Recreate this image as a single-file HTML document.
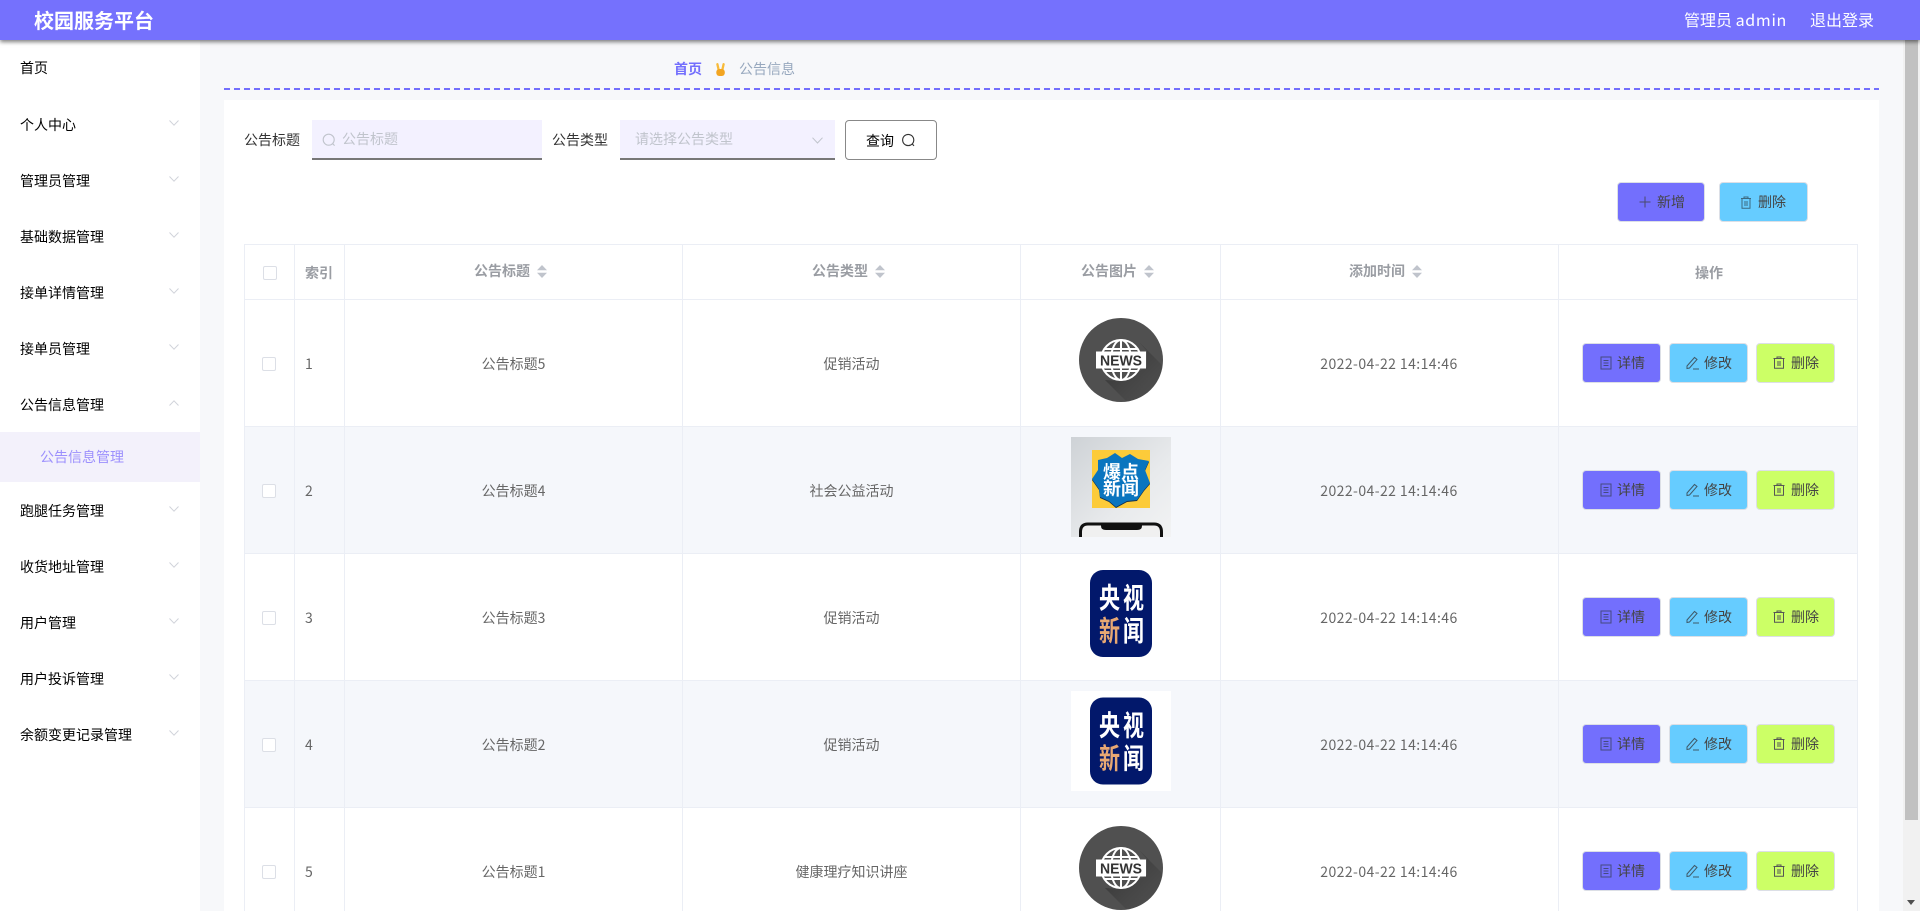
<!DOCTYPE html>
<html lang="zh"><head><meta charset="utf-8"><title>校园服务平台</title>
<style>
*{box-sizing:border-box}
html,body{margin:0;padding:0;width:1920px;height:911px;overflow:hidden;background:#f7f8fa;font-family:"Noto Sans CJK SC","Liberation Sans",sans-serif;font-size:14px;color:#333}
#root{position:relative;width:1920px;height:911px;overflow:hidden;background:#f7f8fa}
.a{position:absolute;white-space:nowrap;line-height:20px}
.hdr{position:absolute;left:0;top:0;width:1920px;height:40px;background:#7571fd;box-shadow:0 2px 4px rgba(0,0,0,.5);z-index:5;color:#fff}
.side{position:absolute;left:0;top:40px;width:200px;height:871px;background:#fff}
.m{position:absolute;left:20px;color:#000;line-height:20px;white-space:nowrap}
.chev{position:absolute;left:169px}
.card{position:absolute;left:224px;top:100px;width:1655px;height:811px;background:#fff}
.row{position:absolute;left:244px;width:1614px;height:127px;border-bottom:1px solid #ebeef5}
.row.alt{background:#f5f7fb}
.row .t{position:absolute;top:calc(53px + var(--d));line-height:20px;text-align:center;color:#666;white-space:nowrap}
.vl{position:absolute;top:244px;width:1px;height:667px;background:#ebeef5}
.cb{position:absolute;left:18px;top:calc(56px + var(--d));width:14px;height:14px;border:1px solid #dcdfe6;background:#fff;border-radius:2px}
.btn{position:absolute;height:40px;top:43px;border:1px solid #dcdfe6;border-radius:4px;line-height:38px;color:#444;font-size:14px;white-space:nowrap}
.btn svg{position:absolute;top:12px}
.btn span{position:absolute;top:0}
.b1{left:1338px;width:79px;background:#736ffd}
.b2{left:1425px;width:79px;background:#66ccff}
.b3{left:1512px;width:79px;background:#ccff66}
.th{position:absolute;line-height:20px;color:#9a9da3;font-weight:700;white-space:nowrap}
.img{position:absolute;display:block}
</style></head><body>
<div id="root">

<div class="hdr">
  <div class="a" style="left:34px;top:10px;font-size:20px;font-weight:700">校园服务平台</div>
  <div class="a" style="left:1684px;top:9px;font-size:16px">管理员 <span style="letter-spacing:.7px">admin</span></div>
  <div class="a" style="left:1810px;top:9px;font-size:16px">退出登录</div>
</div>

<div class="side"></div>
<div class="m" style="top:58px">首页</div>
<div class="m" style="top:115px">个人中心</div>
<div class="m" style="top:171px">管理员管理</div>
<div class="m" style="top:227px">基础数据管理</div>
<div class="m" style="top:283px">接单详情管理</div>
<div class="m" style="top:339px">接单员管理</div>
<div class="m" style="top:395px">公告信息管理</div>
<div style="position:absolute;left:0;top:432px;width:200px;height:50px;background:#f3f1fb"></div>
<div class="m" style="top:447px;left:40px;color:#9c90fd">公告信息管理</div>
<div class="m" style="top:501px">跑腿任务管理</div>
<div class="m" style="top:557px">收货地址管理</div>
<div class="m" style="top:613px">用户管理</div>
<div class="m" style="top:669px">用户投诉管理</div>
<div class="m" style="top:725px">余额变更记录管理</div>

<svg class="chev" style="top:120px" width="10" height="6" viewBox="0 0 10 6"><path d="M.5.5 5 5.2 9.5.5" fill="none" stroke="#d0d3da"/></svg>
<svg class="chev" style="top:176px" width="10" height="6" viewBox="0 0 10 6"><path d="M.5.5 5 5.2 9.5.5" fill="none" stroke="#d0d3da"/></svg>
<svg class="chev" style="top:232px" width="10" height="6" viewBox="0 0 10 6"><path d="M.5.5 5 5.2 9.5.5" fill="none" stroke="#d0d3da"/></svg>
<svg class="chev" style="top:288px" width="10" height="6" viewBox="0 0 10 6"><path d="M.5.5 5 5.2 9.5.5" fill="none" stroke="#d0d3da"/></svg>
<svg class="chev" style="top:344px" width="10" height="6" viewBox="0 0 10 6"><path d="M.5.5 5 5.2 9.5.5" fill="none" stroke="#d0d3da"/></svg>
<svg class="chev" style="top:400px" width="10" height="6" viewBox="0 0 10 6"><path d="M.5 5.5 5 .8 9.5 5.5" fill="none" stroke="#d0d3da"/></svg>
<svg class="chev" style="top:506px" width="10" height="6" viewBox="0 0 10 6"><path d="M.5.5 5 5.2 9.5.5" fill="none" stroke="#d0d3da"/></svg>
<svg class="chev" style="top:562px" width="10" height="6" viewBox="0 0 10 6"><path d="M.5.5 5 5.2 9.5.5" fill="none" stroke="#d0d3da"/></svg>
<svg class="chev" style="top:618px" width="10" height="6" viewBox="0 0 10 6"><path d="M.5.5 5 5.2 9.5.5" fill="none" stroke="#d0d3da"/></svg>
<svg class="chev" style="top:674px" width="10" height="6" viewBox="0 0 10 6"><path d="M.5.5 5 5.2 9.5.5" fill="none" stroke="#d0d3da"/></svg>
<svg class="chev" style="top:730px" width="10" height="6" viewBox="0 0 10 6"><path d="M.5.5 5 5.2 9.5.5" fill="none" stroke="#d0d3da"/></svg>

<div class="a" style="left:674px;top:59px;color:#736ffd;font-weight:700">首页</div>
<svg class="img" style="left:715px;top:63px" width="11" height="13" viewBox="0 0 11 13"><path d="M3.8 7.500 2.400 1.200M7.200 7.500 8.600 1.200" fill="none" stroke="#f8bb3a" stroke-width="2.300" stroke-linecap="round"/><rect x="1.300" y="6" width="8.500" height="7" rx="3" fill="#f3a521"/></svg>
<div class="a" style="left:739px;top:59px;color:#97a8be">公告信息</div>
<div style="position:absolute;left:224px;top:88px;width:1655px;height:2px;background:repeating-linear-gradient(90deg,#736ffd 0 6px,transparent 6px 10px)"></div>

<div class="card"></div>

<!-- search -->
<div class="a" style="left:244px;top:130px;color:#333">公告标题</div>
<div style="position:absolute;left:312px;top:120px;width:230px;height:40px;background:#f3f1ff;border-bottom:2px solid #777"></div>
<svg class="img" style="left:322px;top:133px" width="14" height="14" viewBox="0 0 14 14"><circle cx="6.7" cy="6.7" r="5.5" fill="none" stroke="#c0c4cc" stroke-width="1.1"/><path d="M10.7 10.7 12.6 12.6" stroke="#c0c4cc" stroke-width="1.1"/></svg>
<div class="a" style="left:342px;top:129px;color:#c0c4cc">公告标题</div>
<div class="a" style="left:552px;top:130px;color:#333">公告类型</div>
<div style="position:absolute;left:620px;top:120px;width:215px;height:40px;background:#f3f1ff;border-bottom:2px solid #777"></div>
<div class="a" style="left:635px;top:129px;color:#c0c4cc">请选择公告类型</div>
<svg class="img" style="left:812px;top:137px" width="11" height="7" viewBox="0 0 11 7"><path d="M.5.7 5.500 6 10.500.7" fill="none" stroke="#c0c4cc"/></svg>
<div style="position:absolute;left:845px;top:120px;width:92px;height:40px;background:#fff;border:1px solid #888;border-radius:4px"></div>
<div class="a" style="left:866px;top:131px;color:#000">查询</div>
<svg class="img" style="left:901px;top:133px" width="15" height="15" viewBox="0 0 15 15"><circle cx="7.2" cy="7" r="5.6" fill="none" stroke="#333" stroke-width="1.1"/><path d="M11.2 11 13 12.8" stroke="#333" stroke-width="1.1"/></svg>

<!-- top buttons -->
<div style="position:absolute;left:1617px;top:182px;width:88px;height:40px;background:#736ffd;border:1px solid #dcdfe6;border-radius:4px"></div>
<svg class="img" style="left:1639px;top:196px" width="12" height="12" viewBox="0 0 12 12"><path d="M6 .5v11M.5 6h11" stroke="#4a4a6a" stroke-width="1"/></svg>
<div class="a" style="left:1657px;top:192px;color:#444">新增</div>
<div style="position:absolute;left:1719px;top:182px;width:89px;height:40px;background:#66ccff;border:1px solid #dcdfe6;border-radius:4px"></div>
<svg class="img" style="left:1740px;top:196px" width="12" height="13" viewBox="0 0 12 13"><path d="M1 2.500h10M4 2.500V1h4v1.500M2 2.500V12.300h8V2.500M5 5v5M7 5v5" fill="none" stroke="#3c6a80" stroke-width="1"/></svg>
<div class="a" style="left:1758px;top:192px;color:#444">删除</div>

<!-- table -->
<div style="position:absolute;left:244px;top:244px;width:1614px;height:56px;background:#fff;border-top:1px solid #ebeef5;border-bottom:1px solid #ebeef5"></div>
<div style="position:absolute;left:263px;top:266px;width:14px;height:14px;border:1px solid #dcdfe6;border-radius:2px;background:#fff"></div>
<div class="th" style="left:305px;top:263px">索引</div>
<div class="th" style="left:474px;top:261px">公告标题</div>
<svg class="img" style="left:537px;top:265px" width="10" height="13" viewBox="0 0 10 13"><path d="M5 0 10 5.300H0ZM5 13 0 7.700H10Z" fill="#c0c4cc"/></svg>
<div class="th" style="left:812px;top:261px">公告类型</div>
<svg class="img" style="left:875px;top:265px" width="10" height="13" viewBox="0 0 10 13"><path d="M5 0 10 5.300H0ZM5 13 0 7.700H10Z" fill="#c0c4cc"/></svg>
<div class="th" style="left:1081px;top:261px">公告图片</div>
<svg class="img" style="left:1144px;top:265px" width="10" height="13" viewBox="0 0 10 13"><path d="M5 0 10 5.300H0ZM5 13 0 7.700H10Z" fill="#c0c4cc"/></svg>
<div class="th" style="left:1349px;top:261px">添加时间</div>
<svg class="img" style="left:1412px;top:265px" width="10" height="13" viewBox="0 0 10 13"><path d="M5 0 10 5.300H0ZM5 13 0 7.700H10Z" fill="#c0c4cc"/></svg>
<div class="th" style="left:1695px;top:263px">操作</div>

<!-- row 1 -->
<div class="row" style="top:300px;--d:1px">
  <div class="cb"></div><div class="t" style="left:61px">1</div>
  <div class="t" style="left:100px;width:339px">公告标题5</div>
  <div class="t" style="left:439px;width:337px">促销活动</div>
  <div class="t" style="left:976px;width:338px;letter-spacing:.42px">2022-04-22 14:14:46</div>
  <div class="btn b1"><svg style="left:17px" width="12" height="14" viewBox="0 0 12 14"><path d="M1 1h10v12H1ZM3.500 4.500h5M3.500 7h5M3.500 9.500h5" fill="none" stroke="#444a80"/></svg><span style="left:34px">详情</span></div>
  <div class="btn b2"><svg style="left:16px" width="14" height="14" viewBox="0 0 14 14"><path d="M1 10 8.500 1.500 11 3.500 3.500 12 1 12.500ZM7 13h6" fill="none" stroke="#3f5a6a"/></svg><span style="left:34px">修改</span></div>
  <div class="btn b3"><svg style="left:16px" width="12" height="13" viewBox="0 0 12 13"><path d="M.5 2.500h11M4 2.500V1h4v1.500M1.500 2.500V12.300h9V2.500M5 5v5M7 5v5" fill="none" stroke="#555"/></svg><span style="left:34px">删除</span></div>
</div>
<!-- row 2 -->
<div class="row alt" style="top:427px;--d:1px">
  <div class="cb"></div><div class="t" style="left:61px">2</div>
  <div class="t" style="left:100px;width:339px">公告标题4</div>
  <div class="t" style="left:439px;width:337px">社会公益活动</div>
  <div class="t" style="left:976px;width:338px;letter-spacing:.42px">2022-04-22 14:14:46</div>
  <div class="btn b1"><svg style="left:17px" width="12" height="14" viewBox="0 0 12 14"><path d="M1 1h10v12H1ZM3.500 4.500h5M3.500 7h5M3.500 9.500h5" fill="none" stroke="#444a80"/></svg><span style="left:34px">详情</span></div>
  <div class="btn b2"><svg style="left:16px" width="14" height="14" viewBox="0 0 14 14"><path d="M1 10 8.500 1.500 11 3.500 3.500 12 1 12.500ZM7 13h6" fill="none" stroke="#3f5a6a"/></svg><span style="left:34px">修改</span></div>
  <div class="btn b3"><svg style="left:16px" width="12" height="13" viewBox="0 0 12 13"><path d="M.5 2.500h11M4 2.500V1h4v1.500M1.500 2.500V12.300h9V2.500M5 5v5M7 5v5" fill="none" stroke="#555"/></svg><span style="left:34px">删除</span></div>
</div>
<!-- row 3 -->
<div class="row" style="top:554px;--d:1px">
  <div class="cb"></div><div class="t" style="left:61px">3</div>
  <div class="t" style="left:100px;width:339px">公告标题3</div>
  <div class="t" style="left:439px;width:337px">促销活动</div>
  <div class="t" style="left:976px;width:338px;letter-spacing:.42px">2022-04-22 14:14:46</div>
  <div class="btn b1"><svg style="left:17px" width="12" height="14" viewBox="0 0 12 14"><path d="M1 1h10v12H1ZM3.500 4.500h5M3.500 7h5M3.500 9.500h5" fill="none" stroke="#444a80"/></svg><span style="left:34px">详情</span></div>
  <div class="btn b2"><svg style="left:16px" width="14" height="14" viewBox="0 0 14 14"><path d="M1 10 8.500 1.500 11 3.500 3.500 12 1 12.500ZM7 13h6" fill="none" stroke="#3f5a6a"/></svg><span style="left:34px">修改</span></div>
  <div class="btn b3"><svg style="left:16px" width="12" height="13" viewBox="0 0 12 13"><path d="M.5 2.500h11M4 2.500V1h4v1.500M1.500 2.500V12.300h9V2.500M5 5v5M7 5v5" fill="none" stroke="#555"/></svg><span style="left:34px">删除</span></div>
</div>
<!-- row 4 -->
<div class="row alt" style="top:681px;--d:1px">
  <div class="cb"></div><div class="t" style="left:61px">4</div>
  <div class="t" style="left:100px;width:339px">公告标题2</div>
  <div class="t" style="left:439px;width:337px">促销活动</div>
  <div class="t" style="left:976px;width:338px;letter-spacing:.42px">2022-04-22 14:14:46</div>
  <div class="btn b1"><svg style="left:17px" width="12" height="14" viewBox="0 0 12 14"><path d="M1 1h10v12H1ZM3.500 4.500h5M3.500 7h5M3.500 9.500h5" fill="none" stroke="#444a80"/></svg><span style="left:34px">详情</span></div>
  <div class="btn b2"><svg style="left:16px" width="14" height="14" viewBox="0 0 14 14"><path d="M1 10 8.500 1.500 11 3.500 3.500 12 1 12.500ZM7 13h6" fill="none" stroke="#3f5a6a"/></svg><span style="left:34px">修改</span></div>
  <div class="btn b3"><svg style="left:16px" width="12" height="13" viewBox="0 0 12 13"><path d="M.5 2.500h11M4 2.500V1h4v1.500M1.500 2.500V12.300h9V2.500M5 5v5M7 5v5" fill="none" stroke="#555"/></svg><span style="left:34px">删除</span></div>
</div>
<!-- row 5 -->
<div class="row" style="top:808px;border-bottom:none;--d:1px">
  <div class="cb"></div><div class="t" style="left:61px">5</div>
  <div class="t" style="left:100px;width:339px">公告标题1</div>
  <div class="t" style="left:439px;width:337px">健康理疗知识讲座</div>
  <div class="t" style="left:976px;width:338px;letter-spacing:.42px">2022-04-22 14:14:46</div>
  <div class="btn b1"><svg style="left:17px" width="12" height="14" viewBox="0 0 12 14"><path d="M1 1h10v12H1ZM3.500 4.500h5M3.500 7h5M3.500 9.500h5" fill="none" stroke="#444a80"/></svg><span style="left:34px">详情</span></div>
  <div class="btn b2"><svg style="left:16px" width="14" height="14" viewBox="0 0 14 14"><path d="M1 10 8.500 1.500 11 3.500 3.500 12 1 12.500ZM7 13h6" fill="none" stroke="#3f5a6a"/></svg><span style="left:34px">修改</span></div>
  <div class="btn b3"><svg style="left:16px" width="12" height="13" viewBox="0 0 12 13"><path d="M.5 2.500h11M4 2.500V1h4v1.500M1.500 2.500V12.300h9V2.500M5 5v5M7 5v5" fill="none" stroke="#555"/></svg><span style="left:34px">删除</span></div>
</div>

<div class="vl" style="left:244px"></div>
<div class="vl" style="left:294px"></div>
<div class="vl" style="left:344px"></div>
<div class="vl" style="left:682px"></div>
<div class="vl" style="left:1020px"></div>
<div class="vl" style="left:1220px"></div>
<div class="vl" style="left:1558px"></div>
<div class="vl" style="left:1857px"></div>

<!-- images -->
<svg class="img" style="left:1079px;top:318px" width="84" height="84" viewBox="0 0 84 84">
  <defs><clipPath id="c1"><circle cx="42" cy="42" r="42"/></clipPath><linearGradient id="g1" x1="0" y1="0" x2="1" y2="1"><stop offset="0" stop-color="#222" stop-opacity=".75"/><stop offset="1" stop-color="#4d4d4d" stop-opacity="0"/></linearGradient></defs>
  <circle cx="42" cy="42" r="42" fill="#505050"/>
  <path clip-path="url(#c1)" d="M60 24 68 33V49L42 63 26 62 60 96 96 60Z" fill="url(#g1)"/>
  <g fill="none" stroke="#fff" stroke-width="2"><circle cx="42" cy="42" r="20"/><ellipse cx="42" cy="42" rx="10" ry="20"/><path d="M42 22V62M25 31H59M25 53H59M22 42H62"/></g>
  <rect x="17" y="33.500" width="50" height="17" fill="#fff"/>
  <text x="21" y="47.500" textLength="42" lengthAdjust="spacingAndGlyphs" font-family="Liberation Sans" font-weight="700" font-size="15" fill="#333">NEWS</text>
</svg>

<svg class="img" style="left:1071px;top:437px" width="100" height="100" viewBox="0 0 100 100">
  <defs><linearGradient id="g2" x1="0" y1="0" x2="1" y2="1"><stop offset="0" stop-color="#ced2d6"/><stop offset=".6" stop-color="#e8eaec"/><stop offset="1" stop-color="#f2f3f4"/></linearGradient></defs>
  <rect width="100" height="100" fill="url(#g2)"/>
  <rect x="21" y="13" width="58" height="58" fill="#fccb3a"/>
  <path transform="translate(0 1)" d="M27 23 36 21 44 16 51 21 59 17 67 22 78 24 74 33 79 46 73 53 66 63 56 64 45 70 38 64 29 60 28 52 21 42 27 33Z" fill="#14304a"/>
  <path d="M27 23 36 21 44 16 51 21 59 17 67 22 78 24 74 33 79 46 73 53 66 63 56 64 45 70 38 64 29 60 28 52 21 42 27 33Z" fill="#0a75bf"/>
  <text x="32" y="41.500" font-family="Noto Sans CJK SC" font-weight="700" font-size="18" fill="#fff">爆点</text>
  <text x="32" y="58" font-family="Noto Sans CJK SC" font-weight="700" font-size="18" fill="#fff">新闻</text>
  <path d="M9.500 104V95Q9.500 87 17 87H83Q90.500 87 90.500 95V104Z" fill="#f0f0f0" stroke="#111" stroke-width="3"/>
  <path d="M30 86H71V89Q71 93 66 93H35Q30 93 30 89Z" fill="#111"/>
</svg>

<svg class="img" style="left:1090px;top:570px" width="62" height="87" viewBox="0 0 62 87">
  <rect width="62" height="87" rx="13" fill="#02186b"/>
  <g font-family="Noto Sans CJK SC" font-weight="700" font-size="21">
  <text transform="translate(9 38) scale(1 1.35)" fill="#fff">央</text><text transform="translate(33 38) scale(1 1.35)" fill="#fff">视</text>
  <text transform="translate(9 71) scale(1 1.35)" fill="#e8a873">新</text><text transform="translate(33 71) scale(1 1.35)" fill="#fff">闻</text></g>
</svg>

<svg class="img" style="left:1071px;top:691px" width="100" height="100" viewBox="0 0 100 100">
  <rect width="100" height="100" fill="#fff"/>
  <rect x="19" y="6.500" width="62" height="87" rx="13" fill="#02186b"/>
  <g font-family="Noto Sans CJK SC" font-weight="700" font-size="21">
  <text transform="translate(28 44.500) scale(1 1.35)" fill="#fff">央</text><text transform="translate(52 44.500) scale(1 1.35)" fill="#fff">视</text>
  <text transform="translate(28 77.500) scale(1 1.35)" fill="#e8a873">新</text><text transform="translate(52 77.500) scale(1 1.35)" fill="#fff">闻</text></g>
</svg>

<svg class="img" style="left:1079px;top:826px" width="84" height="84" viewBox="0 0 84 84">
  <defs><clipPath id="c2"><circle cx="42" cy="42" r="42"/></clipPath><linearGradient id="g3" x1="0" y1="0" x2="1" y2="1"><stop offset="0" stop-color="#222" stop-opacity=".75"/><stop offset="1" stop-color="#4d4d4d" stop-opacity="0"/></linearGradient></defs>
  <circle cx="42" cy="42" r="42" fill="#505050"/>
  <path clip-path="url(#c2)" d="M60 24 68 33V49L42 63 26 62 60 96 96 60Z" fill="url(#g3)"/>
  <g fill="none" stroke="#fff" stroke-width="2"><circle cx="42" cy="42" r="20"/><ellipse cx="42" cy="42" rx="10" ry="20"/><path d="M42 22V62M25 31H59M25 53H59M22 42H62"/></g>
  <rect x="17" y="33.500" width="50" height="17" fill="#fff"/>
  <text x="21" y="47.500" textLength="42" lengthAdjust="spacingAndGlyphs" font-family="Liberation Sans" font-weight="700" font-size="15" fill="#333">NEWS</text>
</svg>

<!-- scrollbar -->
<div style="position:absolute;left:1903px;top:40px;width:17px;height:871px;background:#f1f1f1"></div>
<div style="position:absolute;left:1905px;top:40px;width:13px;height:780px;background:#c1c1c1"></div>
<svg class="img" style="left:1907px;top:900px" width="8" height="5" viewBox="0 0 8 5"><path d="M0 0H8L4 5Z" fill="#505050"/></svg>
</div>
</body></html>
